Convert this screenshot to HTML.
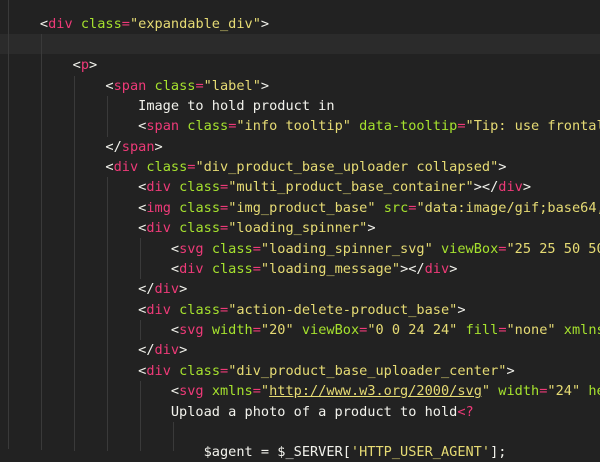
<!DOCTYPE html>
<html><head><meta charset="utf-8"><style>
html,body{margin:0;padding:0;}
body{width:600px;height:449px;background:#222222;overflow:hidden;position:relative;font-family:"DejaVu Sans Mono","Liberation Mono",monospace;font-size:13.6px;color:#f2f2ec;}
.l{position:absolute;left:-1px;white-space:pre;height:20px;line-height:20px;}
.t{color:#ee3a78}.a{color:#a6e22e}.s{color:#e6db74}.u{text-decoration:underline}
.hl{position:absolute;left:0;width:600px;top:34px;height:20px;background:#2b2b2b;}
.g{position:absolute;width:1px;background:#3a3a3a;}
</style></head><body>
<div class="hl"></div>
<div class="g" style="left:8px;top:0;height:449px"></div>
<div class="g" style="left:41px;top:34px;height:416px"></div>
<div class="g" style="left:74px;top:76px;height:375px"></div>
<div class="g" style="left:107px;top:96px;height:41px"></div>
<div class="g" style="left:107px;top:177px;height:274px"></div>
<div class="g" style="left:140px;top:238px;height:41px"></div>
<div class="g" style="left:140px;top:320px;height:20px"></div>
<div class="g" style="left:140px;top:381px;height:70px"></div>
<div class="g" style="left:173px;top:422px;height:29px"></div>
<div class="l" style="top:14px">     &lt;<span class="t">div</span> <span class="a">class</span><span class="t">=</span><span class="s">"expandable_div"</span>&gt;</div>
<div class="l" style="top:55px">         &lt;<span class="t">p</span>&gt;</div>
<div class="l" style="top:76px">             &lt;<span class="t">span</span> <span class="a">class</span><span class="t">=</span><span class="s">"label"</span>&gt;</div>
<div class="l" style="top:96px">                 Image to hold product in</div>
<div class="l" style="top:116px">                 &lt;<span class="t">span</span> <span class="a">class</span><span class="t">=</span><span class="s">"info tooltip"</span> <span class="a">data-tooltip</span><span class="t">=</span><span class="s">"Tip: use frontal</span></div>
<div class="l" style="top:137px">             &lt;/<span class="t">span</span>&gt;</div>
<div class="l" style="top:157px">             &lt;<span class="t">div</span> <span class="a">class</span><span class="t">=</span><span class="s">"div_product_base_uploader collapsed"</span>&gt;</div>
<div class="l" style="top:177px">                 &lt;<span class="t">div</span> <span class="a">class</span><span class="t">=</span><span class="s">"multi_product_base_container"</span>&gt;&lt;/<span class="t">div</span>&gt;</div>
<div class="l" style="top:198px">                 &lt;<span class="t">img</span> <span class="a">class</span><span class="t">=</span><span class="s">"img_product_base"</span> <span class="a">src</span><span class="t">=</span><span class="s">"data:image/gif;base64,</span></div>
<div class="l" style="top:218px">                 &lt;<span class="t">div</span> <span class="a">class</span><span class="t">=</span><span class="s">"loading_spinner"</span>&gt;</div>
<div class="l" style="top:239px">                     &lt;<span class="t">svg</span> <span class="a">class</span><span class="t">=</span><span class="s">"loading_spinner_svg"</span> <span class="a">viewBox</span><span class="t">=</span><span class="s">"25 25 50 50"</span></div>
<div class="l" style="top:259px">                     &lt;<span class="t">div</span> <span class="a">class</span><span class="t">=</span><span class="s">"loading_message"</span>&gt;&lt;/<span class="t">div</span>&gt;</div>
<div class="l" style="top:279px">                 &lt;/<span class="t">div</span>&gt;</div>
<div class="l" style="top:300px">                 &lt;<span class="t">div</span> <span class="a">class</span><span class="t">=</span><span class="s">"action-delete-product_base"</span>&gt;</div>
<div class="l" style="top:320px">                     &lt;<span class="t">svg</span> <span class="a">width</span><span class="t">=</span><span class="s">"20"</span> <span class="a">viewBox</span><span class="t">=</span><span class="s">"0 0 24 24"</span> <span class="a">fill</span><span class="t">=</span><span class="s">"none"</span> <span class="a">xmlns</span></div>
<div class="l" style="top:340px">                 &lt;/<span class="t">div</span>&gt;</div>
<div class="l" style="top:361px">                 &lt;<span class="t">div</span> <span class="a">class</span><span class="t">=</span><span class="s">"div_product_base_uploader_center"</span>&gt;</div>
<div class="l" style="top:381px">                     &lt;<span class="t">svg</span> <span class="a">xmlns</span><span class="t">=</span><span class="s">"<span class="u">http://www.w3.org/2000/svg</span>"</span> <span class="a">width</span><span class="t">=</span><span class="s">"24"</span> <span class="a">he</span></div>
<div class="l" style="top:402px">                     Upload a photo of a product to hold<span class="t">&lt;?</span></div>
<div class="l" style="top:442px">                         $agent = $_SERVER[<span class="s">'HTTP_USER_AGENT'</span>];</div>
</body></html>
